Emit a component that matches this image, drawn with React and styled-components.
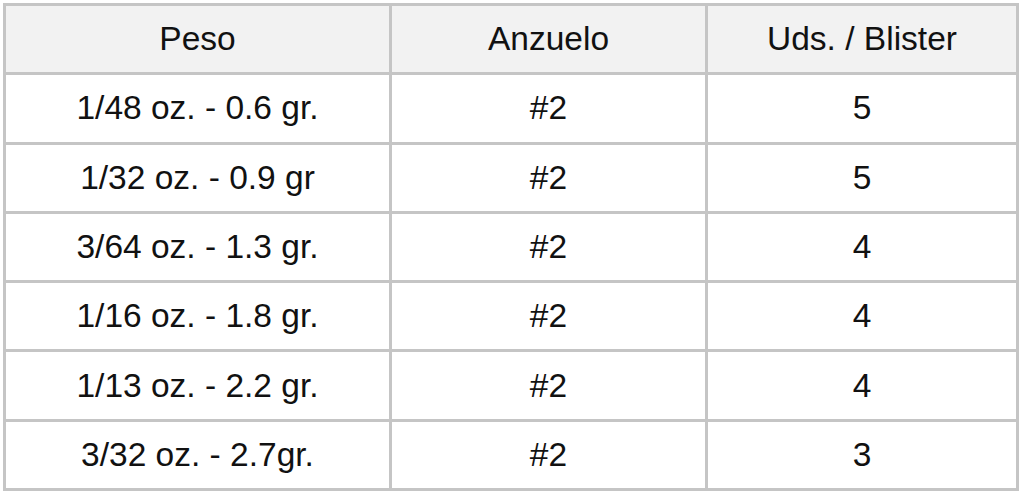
import React from "react";
import styled, { createGlobalStyle } from "styled-components";

const rows = [
  ["1/48 oz. - 0.6 gr.", "#2", "5"],
  ["1/32 oz. - 0.9 gr", "#2", "5"],
  ["3/64 oz. - 1.3 gr.", "#2", "4"],
  ["1/16 oz. - 1.8 gr.", "#2", "4"],
  ["1/13 oz. - 2.2 gr.", "#2", "4"],
  ["3/32 oz. - 2.7gr.", "#2", "3"],
];

function App() {
  return (
    <>
      <Global />
      <Wrap>
        <Table>
          <colgroup>
            <col style={{ width: 386 }} />
            <col style={{ width: 316 }} />
            <col />
          </colgroup>
          <thead>
            <tr>
              <Head>Peso</Head>
              <Head>Anzuelo</Head>
              <Head>Uds. / Blister</Head>
            </tr>
          </thead>
          <tbody>
            {rows.map((r) => (
              <tr key={r[0]}>
                {r.map((c, i) => (
                  <Cell key={i}>{c}</Cell>
                ))}
              </tr>
            ))}
          </tbody>
        </Table>
      </Wrap>
    </>
  );
}

const Global = createGlobalStyle`
  body {
    margin: 0;
    background: #ffffff;
    font-family: "Liberation Sans", Arial, sans-serif;
  }
`;

const Wrap = styled.div`
  padding: 3px 4px 0 3px;
  width: 1024px;
  box-sizing: border-box;
`;

const Table = styled.table`
  width: 1016px;
  table-layout: fixed;
  border-collapse: collapse;
  border: 3px solid #c5c5c5;
`;

const Head = styled.th`
  height: 66.3px;
  padding: 0;
  background: #f2f2f2;
  border: 3px solid #c5c5c5;
  font-weight: normal;
  font-size: 33.5px;
  color: #111;
  text-align: center;
`;

const Cell = styled.td`
  height: 66.3px;
  padding: 0;
  border: 3px solid #c5c5c5;
  font-size: 33.5px;
  color: #111;
  text-align: center;
`;

export default App;
